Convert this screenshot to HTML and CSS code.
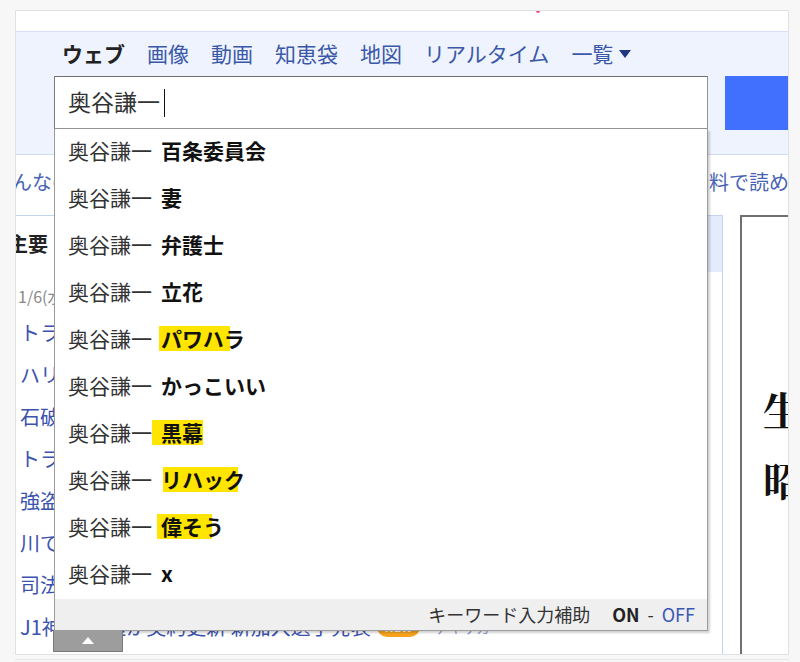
FILE: index.html
```html
<!DOCTYPE html>
<html lang="ja">
<head>
<meta charset="utf-8">
<title>Yahoo! 検索</title>
<link rel="stylesheet" href="styles.css">
</head>
<body>
<div class="frame">
  <div class="topbar"><span class="logo-dot"></span></div>
  <header class="search-area">
    <nav class="tabs">
      <a class="current">ウェブ</a>
      <a href="#">画像</a>
      <a href="#">動画</a>
      <a href="#">知恵袋</a>
      <a href="#">地図</a>
      <a href="#">リアルタイム</a>
      <a href="#" class="more">一覧<svg class="more-icon" width="12" height="8" viewBox="0 0 12 8"><path d="M0 0H12L6 8Z" fill="#1f357f"/></svg></a>
    </nav>
    <div class="search-row">
      <div class="search-box">
        <span class="query">奥谷謙一</span><span class="caret"></span>
        <div class="suggest">
          <ul class="suggest-list">
            <li>奥谷謙一<b>百条委員会</b></li>
            <li>奥谷謙一<b>妻</b></li>
            <li>奥谷謙一<b>弁護士</b></li>
            <li>奥谷謙一<b>立花</b></li>
            <li>奥谷謙一<b class="hl hl-a">パワハラ</b></li>
            <li>奥谷謙一<b>かっこいい</b></li>
            <li>奥谷謙一<b class="hl hl-b">黒幕</b></li>
            <li>奥谷謙一<b class="hl hl-c">リハック</b></li>
            <li>奥谷謙一<b class="hl hl-d">偉そう</b></li>
            <li>奥谷謙一<b>x</b></li>
          </ul>
          <div class="suggest-foot">
            <span class="assist">キーワード入力補助</span>
            <span class="on">ON</span>
            <span class="dash">-</span>
            <a href="#" class="off">OFF</a>
          </div>
          <div class="close-tab"><svg width="12" height="7" viewBox="0 0 12 7"><path d="M0 7H12L6 0Z" fill="#fff"/></svg></div>
        </div>
      </div>
      <div class="search-btn"></div>
    </div>
  </header>
  <div class="notice">
    <a href="#">みんなの漫画アプリ</a>
    <a href="#">人気作品が無料で読める</a>
  </div>
  <main class="content">
    <section class="topics">
      <div class="topics-head"><span class="tab-on">主要</span></div>
      <div class="date">1/6(水)</div>
      <ul class="topic-list">
        <li>トランプ氏 就任式の準備進む</li>
        <li>ハリス氏 選挙結果を認定</li>
        <li>石破首相 年頭会見で表明</li>
        <li>トランプ氏 関税巡り発言</li>
        <li>強盗事件 容疑者を逮捕</li>
        <li>川で男性死亡 警察が捜査</li>
        <li>司法試験 合格者数を発表</li>
        <li>J1神戸 大迫が契約更新 新加入選手発表<span class="new">NEW</span><span class="src">ゲキサカ</span></li>
      </ul>
    </section>
    <aside class="ad">
      <p>生</p>
      <p>昭</p>
    </aside>
  </main>
</div>
<div class="frame-under"></div>
</body>
</html>
```

FILE: styles.css
```css
* {
  box-sizing: border-box;
  margin: 0;
  padding: 0;
}

body {
  background: #f7f7f7;
  font-family: "Noto Sans CJK JP", sans-serif;
}

a {
  text-decoration: none;
}

.frame {
  margin: 10px 0 0 15px;
  width: 774px;
  height: 645px;
  border: 1px solid #e1e1e1;
  background: #fff;
  overflow: hidden;
}

.frame-under {
  margin: 4px 0 0 15px;
  width: 774px;
  height: 1px;
  background: #e6e6e6;
}

.topbar {
  height: 20px;
  position: relative;
}

.logo-dot {
  position: absolute;
  left: 520px;
  top: 0;
  width: 4px;
  height: 2px;
  background: #f0577a;
  border-radius: 0 0 2px 2px;
}

.search-area {
  background: #eef3fe;
  border-top: 1px solid #d6e1f7;
  border-bottom: 1px solid #d0dcf3;
  padding: 7px 0 24px 0;
}

.tabs {
  display: flex;
  align-items: center;
  gap: 22px;
  height: 28px;
  padding-left: 46px;
  font-size: 21px;
  line-height: 28px;
}

.tabs a {
  color: #3b58a8;
  flex: none;
}

.tabs .current {
  color: #222;
  font-weight: bold;
}

.more {
  display: flex;
  align-items: center;
}

.more-icon {
  margin-left: 6px;
  margin-top: 2px;
}

.search-row {
  display: flex;
  align-items: flex-start;
  margin-top: 9px;
  padding-left: 38px;
}

.search-box {
  position: relative;
  flex: none;
  width: 654px;
  height: 53px;
  background: #fff;
  border: 1px solid #939393;
  border-top-color: #707070;
  border-left-color: #7c7c7c;
  display: flex;
  align-items: center;
  padding-left: 13px;
  padding-bottom: 4px;
  font-size: 23px;
  color: #333;
}

.caret {
  width: 1px;
  height: 28px;
  background: #111;
  margin-left: 4px;
  margin-top: 4px;
}

.search-btn {
  flex: none;
  margin-left: 17px;
  width: 80px;
  height: 54px;
  background: #416ffe;
}

.suggest {
  position: absolute;
  top: calc(100% + 1px);
  left: -1px;
  width: 654px;
  background: #fff;
  border: 1px solid #9c9c9c;
  border-top: none;
  box-shadow: 2px 2px 2px rgba(0, 0, 0, 0.18);
  z-index: 10;
}

.suggest-list {
  list-style: none;
}

.suggest-list li {
  height: 47px;
  line-height: 43px;
  padding: 0 0 4px 13px;
  font-size: 21px;
  color: #333;
  white-space: nowrap;
}

.suggest-list b {
  margin-left: 9px;
  color: #111;
  font-weight: bold;
}

.hl {
  background-image: linear-gradient(#ffe500, #ffe500);
  background-repeat: no-repeat;
  background-position: left center;
}

.suggest-list .hl-a {
  margin-left: 7px;
  padding-left: 2px;
  background-size: 71px 25px;
}

.suggest-list .hl-b {
  margin-left: 0;
  padding-left: 9px;
  background-size: 51px 25px;
}

.suggest-list .hl-c {
  margin-left: 9px;
  background-position: 2px center;
  background-size: 75px 25px;
}

.suggest-list .hl-d {
  margin-left: 5px;
  padding-left: 4px;
  background-size: 55px 25px;
}

.suggest-foot {
  height: 31px;
  background: #efefef;
  display: flex;
  align-items: center;
  justify-content: flex-end;
  padding: 0 12px 2px 0;
  font-size: 18px;
  color: #333;
}

.suggest-foot .on {
  margin-left: 22px;
  font-weight: bold;
  color: #222;
}

.suggest-foot .dash {
  margin: 0 8px;
}

.suggest-foot .off {
  color: #3a59b5;
}

.close-tab {
  position: absolute;
  top: 100%;
  left: -2px;
  width: 70px;
  height: 22px;
  background: #9d9d9d;
  border: 1px solid #7a7a7a;
  border-top: none;
  display: flex;
  align-items: center;
  justify-content: center;
}

.notice {
  height: 60px;
  padding-bottom: 8px;
  margin: 0 -21px 0 -24px;
  display: flex;
  align-items: center;
  justify-content: space-between;
  font-size: 20px;
}

.notice a {
  color: #4863b4;
  white-space: nowrap;
}

.content {
  display: flex;
  align-items: flex-start;
}

.topics {
  flex: none;
  width: 717px;
  height: 470px;
  margin-left: -10px;
  border: 1px solid #c3d3f3;
}

.topics-head {
  height: 56px;
  background: #e3ebfc;
  display: flex;
}

.tab-on {
  width: 80px;
  height: 56px;
  background: #fff;
  display: flex;
  align-items: center;
  padding: 0 0 2px 1px;
  font-size: 20px;
  font-weight: bold;
  color: #222;
}

.date {
  padding: 13px 0 0 11px;
  font-size: 16px;
  line-height: 22px;
  color: #888;
}

.topic-list {
  list-style: none;
  margin-top: 5px;
}

.topic-list li {
  height: 42px;
  line-height: 42px;
  padding-left: 13px;
  font-size: 20px;
  color: #3b52ae;
  white-space: nowrap;
  display: flex;
  align-items: center;
}

.new {
  margin-left: 6px;
  height: 20px;
  line-height: 20px;
  padding: 0 8px;
  border-radius: 10px;
  background: #f7a41c;
  color: #fff;
  font-size: 12px;
  font-weight: bold;
}

.src {
  margin-left: 14px;
  font-size: 14px;
  color: #8c9bc9;
}

.ad {
  flex: none;
  width: 80px;
  height: 470px;
  margin-left: 17px;
  border: 2px solid #707070;
  border-right: none;
  padding: 157px 0 0 21px;
  font-family: "Noto Serif CJK JP", "Noto Sans CJK JP", serif;
  font-size: 40px;
  line-height: 70px;
  font-weight: 700;
  color: #111;
}
```
